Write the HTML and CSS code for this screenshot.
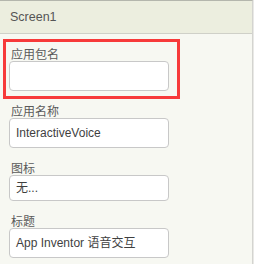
FILE: index.html
```html
<!DOCTYPE html>
<html>
<head>
<meta charset="utf-8">
<link rel="stylesheet" href="styles.css">
</head>
<body>
<div class="panel">
  <div class="header">Screen1</div>
  <div class="props">
    <div class="prop highlight">
      <div class="label">应用包名</div>
      <div class="field"></div>
    </div>
    <div class="prop">
      <div class="label">应用名称</div>
      <div class="field">InteractiveVoice</div>
    </div>
    <div class="prop">
      <div class="label">图标</div>
      <div class="field short">无...</div>
    </div>
    <div class="prop">
      <div class="label">标题</div>
      <div class="field">App Inventor 语音交互</div>
    </div>
  </div>
</div>
</body>
</html>
```
FILE: styles.css
```css
html, body {
  margin: 0;
  padding: 0;
}
body {
  background: #e9e9e6;
  font-family: "Liberation Sans", Arial, "Noto Sans CJK SC", sans-serif;
  font-size: 12px;
}
.panel {
  width: 252px;
  height: 263px;
  border-top: 1px solid #b4b6ad;
  border-right: 1px solid #d4d4d0;
  background: #f7f8f2;
  overflow: hidden;
}
.header {
  height: 31px;
  line-height: 31px;
  padding: 1px 0 0 10px;
  background: #eceedf;
  border-bottom: 1px solid #cfd0c8;
  color: #555;
  font-size: 12.5px;
}
.props {
  padding: 8px 0 0 6px;
}
.prop {
  width: 160px;
  padding: 3px 8px 5px 3px;
  margin-bottom: 3px;
}
.highlight {
  outline: 3px solid #f73a3a;
}
.label {
  height: 16px;
  line-height: 17px;
  padding-left: 2px;
  color: #5a5a5a;
  font-family: "Noto Sans CJK SC", sans-serif;
}
.field {
  box-sizing: border-box;
  width: 160px;
  height: 30px;
  line-height: 28px;
  border: 1px solid #c8c8c8;
  border-radius: 4px;
  background: #fff;
  padding-left: 6px;
  color: #3f3f3f;
  white-space: nowrap;
}
.field.short {
  height: 26px;
  line-height: 24px;
}
```
